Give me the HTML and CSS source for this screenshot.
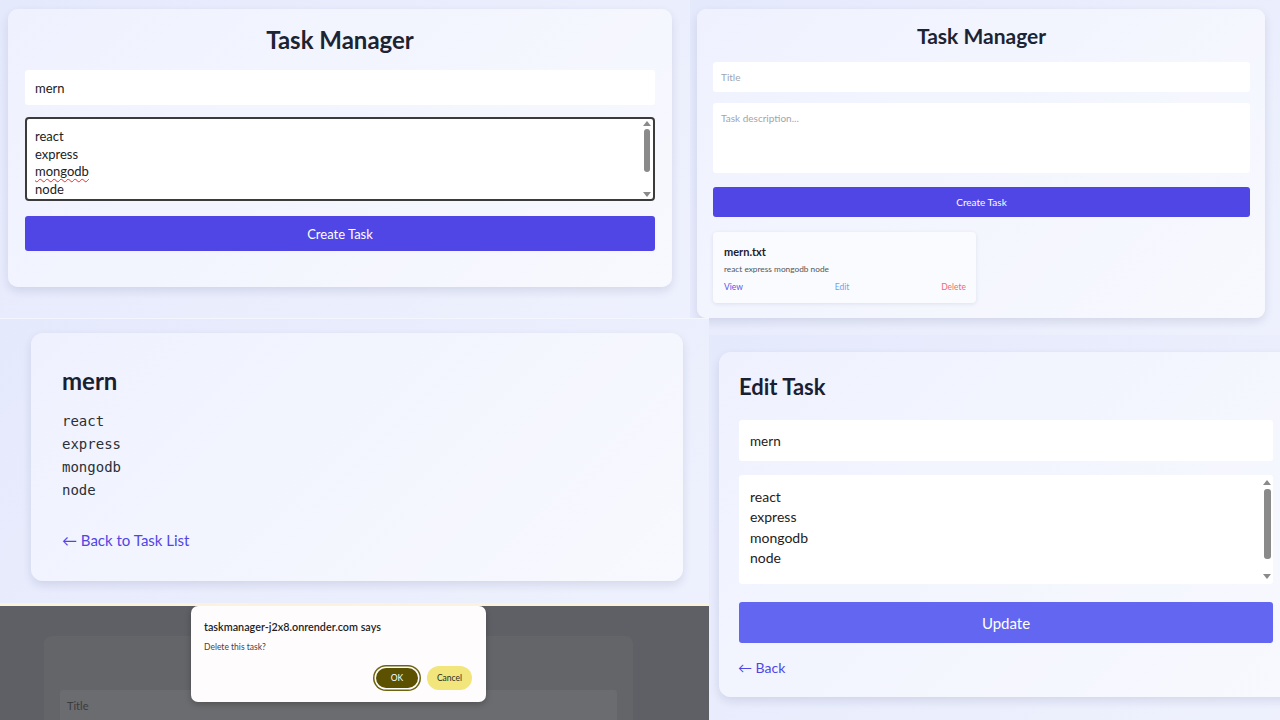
FILE: index.html
```html
<!DOCTYPE html>
<html lang="en">
<head>
<meta charset="utf-8">
<title>Task Manager – screenshots</title>
<link rel="stylesheet" href="styles.css">
</head>
<body>
<div class="collage">

  <!-- A: create form, filled -->
  <section class="panel panel-a">
    <div class="card card-a">
      <h1 class="title-a">Task Manager</h1>
      <div class="field field-a">mern</div>
      <div class="area area-a">
        <div class="lines lines-a">
          <div>react</div>
          <div>express</div>
          <div><span class="typo">mongodb</span></div>
          <div>node</div>
        </div>
        <div class="scrollbar sb-a"><span class="arr up"></span><span class="thumb"></span><span class="arr down"></span></div>
      </div>
      <div class="btn btn-a">Create Task</div>
    </div>
  </section>

  <!-- D: create form, empty, with task card -->
  <section class="panel panel-d">
    <div class="card card-d">
      <h1 class="title-d">Task Manager</h1>
      <div class="field field-d placeholder">Title</div>
      <div class="area area-d placeholder">Task description...</div>
      <div class="btn btn-d">Create Task</div>
      <div class="task">
        <div class="task-title">mern.txt</div>
        <div class="task-desc">react express mongodb node</div>
        <div class="task-links">
          <span class="lk view">View</span>
          <span class="lk edit">Edit</span>
          <span class="lk del">Delete</span>
        </div>
      </div>
    </div>
  </section>

  <!-- B: view task -->
  <section class="panel panel-b">
    <div class="card card-b">
      <h2 class="title-b">mern</h2>
      <div class="mono">
        <div>react</div>
        <div>express</div>
        <div>mongodb</div>
        <div>node</div>
      </div>
      <div class="back back-b">← Back to Task List</div>
    </div>
  </section>

  <!-- C: confirm dialog -->
  <section class="panel panel-c">
    <div class="ghost-card">
      <div class="ghost-input">Title</div>
    </div>
    <div class="dialog">
      <div class="dlg-title">taskmanager-j2x8.onrender.com says</div>
      <div class="dlg-msg">Delete this task?</div>
      <div class="dlg-actions">
        <span class="dbtn ok">OK</span>
        <span class="dbtn cancel">Cancel</span>
      </div>
    </div>
  </section>

  <!-- E: edit task -->
  <section class="panel panel-e">
    <div class="card card-e">
      <h2 class="title-e">Edit Task</h2>
      <div class="field field-e">mern</div>
      <div class="area area-e">
        <div class="lines lines-e">
          <div>react</div>
          <div>express</div>
          <div>mongodb</div>
          <div>node</div>
        </div>
        <div class="scrollbar sb-e"><span class="arr up"></span><span class="thumb"></span><span class="arr down"></span></div>
      </div>
      <div class="btn btn-e">Update</div>
      <div class="back back-e">← Back</div>
    </div>
  </section>

</div>
</body>
</html>
```

FILE: styles.css
```css
* { box-sizing: border-box; }

html, body {
  margin: 0;
  padding: 0;
  width: 1280px;
  height: 720px;
  overflow: hidden;
  font-family: "Lato", "Noto Sans", sans-serif;
  color: #1f2937;
  background: #e8ecfb;
}

.collage {
  display: grid;
  grid-template-columns: 690px 19px 571px;
  grid-template-rows: 318px 17px 268px 117px;
  width: 1280px;
  height: 720px;
}

.panel {
  position: relative;
  overflow: hidden;
  background: linear-gradient(135deg, #e5e9fc 0%, #eef1fd 100%);
}

.panel-a { grid-column: 1; grid-row: 1; padding: 9px 0 0 8px; }
.panel-d { grid-column: 2 / 4; grid-row: 1 / 3; padding: 9px 0 0 7px; }
.panel-b { grid-column: 1 / 3; grid-row: 2 / 4; padding: 14px 0 0 31px; border-top: 1px solid #f4f6fe; }
.panel-c { grid-column: 1 / 3; grid-row: 4; background: #5f6065; border-top: 3px solid #fbf3dc; }
.panel-e { grid-column: 3; grid-row: 3 / 5; padding: 17px 0 0 10px; }

.card {
  display: flex;
  flex-direction: column;
  background: linear-gradient(135deg, #eff2fe 0%, #f8f9fe 100%);
  box-shadow: 0 4px 10px rgba(30, 40, 90, 0.12);
}

/* ---------- A ---------- */
.card-a {
  width: 664px;
  height: 278px;
  border-radius: 10px;
  padding: 16px 17px 0 17px;
}
.title-a {
  margin: 0;
  font-size: 24px;
  line-height: 30px;
  font-weight: 700;
  text-align: center;
  color: #1b2433;
}
.field {
  background: #fff;
  border-radius: 3px;
  display: flex;
  align-items: center;
  color: #222;
}
.field-a {
  margin-top: 15px;
  height: 35px;
  padding-left: 10px;
  font-size: 13px;
}
.area {
  position: relative;
  background: #fff;
  border-radius: 3px;
  color: #222;
}
.area-a {
  margin-top: 12px;
  height: 84px;
  border: 2px solid #3b3b3b;
  border-radius: 4px;
  padding: 9px 0 0 8px;
  font-size: 13px;
}
.lines-a div { line-height: 17.7px; }
.typo {
  text-decoration: underline wavy #e03030;
  text-decoration-thickness: 1px;
  text-underline-offset: 2px;
}
.btn {
  display: flex;
  align-items: center;
  justify-content: center;
  color: #fff;
  border-radius: 3px;
}
.btn-a {
  margin-top: 15px;
  height: 35px;
  background: #4f46e5;
  font-size: 13px;
}

/* scrollbars */
.scrollbar {
  position: absolute;
  display: flex;
  flex-direction: column;
  align-items: center;
  width: 10px;
}
.scrollbar .thumb {
  width: 6px;
  background: #8a8a8a;
  border-radius: 3px;
}
.arr {
  width: 0;
  height: 0;
  border-left: 4px solid transparent;
  border-right: 4px solid transparent;
}
.arr.up { border-bottom: 5px solid #8a8a8a; }
.arr.down { border-top: 5px solid #8a8a8a; }
.sb-a { right: 1px; top: 2px; bottom: 2px; }
.sb-a .thumb { height: 43px; margin-top: 3px; }
.sb-a .arr.down { margin-top: auto; }
.sb-e { right: 1px; top: 5px; bottom: 5px; }
.sb-e .thumb { width: 7px; height: 70px; margin-top: 4px; }
.sb-e .arr { border-left-width: 4.5px; border-right-width: 4.5px; }
.sb-e .arr.down { margin-top: auto; }

/* ---------- D ---------- */
.card-d {
  width: 568px;
  height: 309px;
  border-radius: 9px;
  padding: 14px 15px 0 16px;
}
.title-d {
  margin: 0;
  font-size: 21px;
  line-height: 26px;
  font-weight: 700;
  text-align: center;
  color: #1b2433;
}
.placeholder { color: #a0a5b0; font-size: 10px; }
.field-d {
  margin-top: 13px;
  height: 30px;
  padding-left: 8px;
}
.area-d {
  margin-top: 11px;
  height: 70px;
  padding: 9px 0 0 8px;
  line-height: 12px;
}
.btn-d {
  margin-top: 14px;
  height: 30px;
  background: #4f46e5;
  font-size: 10px;
}
.task {
  margin-top: 15px;
  width: 263px;
  height: 71px;
  background: #fafbff;
  border-radius: 4px;
  box-shadow: 0 1px 4px rgba(30, 40, 90, 0.1);
  padding: 13px 10px 0 11px;
}
.task-title {
  font-size: 11px;
  line-height: 14px;
  font-weight: 700;
  color: #1b2030;
}
.task-desc {
  margin-top: 4px;
  font-size: 8.3px;
  line-height: 12px;
  color: #555;
}
.task-links {
  margin-top: 6px;
  display: flex;
  justify-content: space-between;
  font-size: 8.5px;
  line-height: 12px;
}
.lk.view { color: #5b55e6; }
.lk.edit { color: #6aa4f5; }
.lk.del { color: #f16a6a; }

/* ---------- B ---------- */
.card-b {
  width: 652px;
  height: 248px;
  border-radius: 12px;
  padding: 33px 31px 0 31px;
}
.title-b {
  margin: 0;
  font-size: 24px;
  line-height: 30px;
  font-weight: 700;
  color: #1b2030;
}
.mono {
  margin-top: 14px;
  font-family: "DejaVu Sans Mono", "Liberation Mono", monospace;
  font-size: 14px;
  line-height: 23px;
  color: #2a2f38;
}
.back {
  color: #4f46e5;
}
.back-b {
  margin-top: 28px;
  font-size: 15px;
  line-height: 20px;
}

/* ---------- C ---------- */
.ghost-card {
  position: absolute;
  left: 44px;
  top: 30px;
  width: 589px;
  height: 120px;
  background: #646569;
  border-radius: 8px;
  padding: 54px 16px 0 16px;
}
.ghost-input {
  height: 40px;
  background: #6b6c6f;
  border-radius: 3px;
  padding: 9px 0 0 7px;
  font-size: 11px;
  color: #3a3b3e;
}
.dialog {
  position: absolute;
  left: 191px;
  top: 0;
  width: 295px;
  height: 96px;
  background: #fffcfe;
  border-radius: 7px;
  box-shadow: 0 2px 6px rgba(0, 0, 0, 0.25);
  padding: 14px 14px 0 13px;
  display: flex;
  flex-direction: column;
}
.dlg-title {
  font-size: 10.8px;
  line-height: 14px;
  font-weight: 600;
  color: #1e1e1e;
}
.dlg-msg {
  margin-top: 7px;
  font-size: 8.5px;
  line-height: 12px;
  color: #444;
}
.dlg-actions {
  margin-top: 13px;
  display: flex;
  justify-content: flex-end;
  align-items: center;
  gap: 9px;
}
.dbtn {
  display: flex;
  align-items: center;
  justify-content: center;
  font-size: 8.5px;
  border-radius: 13px;
}
.dbtn.ok {
  width: 42px;
  height: 20px;
  background: #5c5100;
  color: #fff;
  box-shadow: 0 0 0 1.5px #fff, 0 0 0 3px #6e6410;
}
.dbtn.cancel {
  width: 45px;
  height: 24px;
  background: #f1e57c;
  color: #2b2b2b;
}

/* ---------- E ---------- */
.card-e {
  width: 580px;
  height: 345px;
  border-radius: 12px;
  padding: 21px 26px 0 20px;
}
.title-e {
  margin: 0;
  font-size: 22px;
  line-height: 28px;
  font-weight: 700;
  color: #1b2030;
}
.field-e {
  margin-top: 19px;
  height: 41px;
  padding-left: 11px;
  font-size: 13.5px;
}
.area-e {
  margin-top: 14px;
  height: 109px;
  padding: 12px 0 0 11px;
  font-size: 14px;
}
.lines-e div { line-height: 20.4px; }
.btn-e {
  margin-top: 18px;
  height: 41px;
  background: #6366f1;
  font-size: 15px;
}
.back-e {
  margin-top: 15px;
  margin-left: -1px;
  font-size: 14px;
  line-height: 20px;
}
```
